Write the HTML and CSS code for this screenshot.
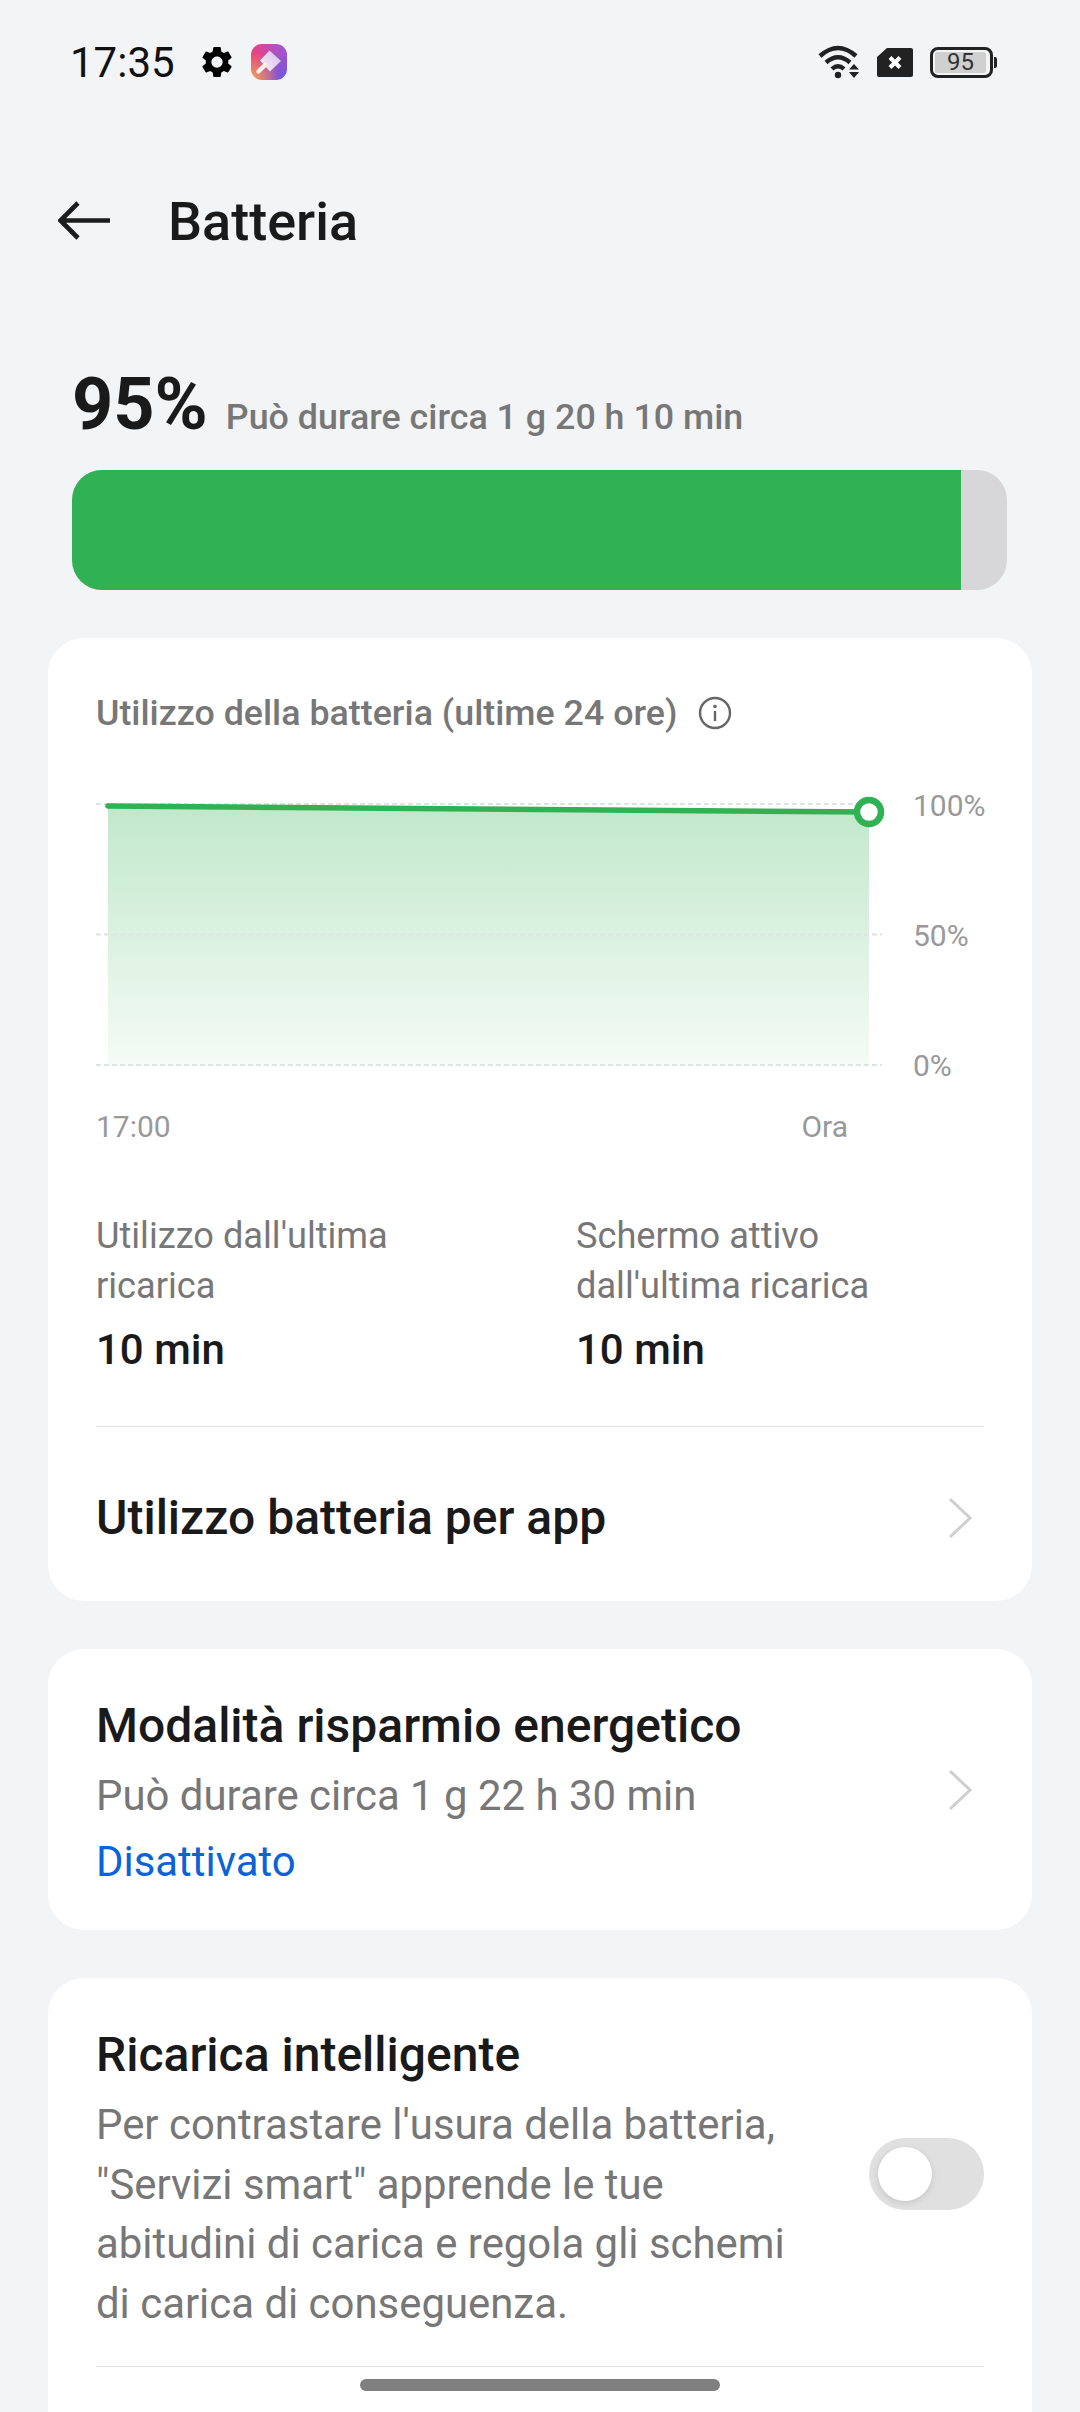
FILE: index.html
```html
<!DOCTYPE html>
<html lang="it">
<head>
  <meta charset="UTF-8" />
  <title>Batteria</title>
  <link rel="stylesheet" href="styles.css">
</head>
<body>
  <div class="screen">
    <div class="status-bar">
      <span class="clock">17:35</span>
      <svg class="gear" viewBox="2.4 2.4 19.2 19.2"><path fill-rule="evenodd" d="M19.14,12.94c0.04-0.3,0.06-0.61,0.06-0.94c0-0.32-0.02-0.64-0.07-0.94l2.03-1.58c0.18-0.14,0.23-0.41,0.12-0.61l-1.92-3.32c-0.12-0.22-0.37-0.29-0.59-0.22l-2.39,0.96c-0.5-0.38-1.03-0.7-1.62-0.94L14.4,2.81c-0.04-0.24-0.24-0.41-0.48-0.41h-3.84c-0.24,0-0.43,0.17-0.47,0.41L9.25,5.35C8.66,5.59,8.12,5.92,7.63,6.29L5.24,5.33c-0.22-0.08-0.47,0-0.59,0.22L2.74,8.87C2.62,9.08,2.66,9.34,2.86,9.48l2.03,1.58C4.84,11.36,4.8,11.69,4.8,12s0.02,0.64,0.07,0.94l-2.03,1.58c-0.18,0.14-0.23,0.41-0.12,0.61l1.92,3.32c0.12,0.22,0.37,0.29,0.59,0.22l2.39-0.96c0.5,0.38,1.03,0.7,1.62,0.94l0.36,2.54c0.05,0.24,0.24,0.41,0.48,0.41h3.84c0.24,0,0.44-0.17,0.47-0.41l0.36-2.54c0.59-0.24,1.13-0.56,1.62-0.94l2.39,0.96c0.22,0.08,0.47,0,0.59-0.22l1.92-3.32c0.12-0.22,0.07-0.47-0.12-0.61L19.14,12.94z M12,15.6c-1.98,0-3.6-1.62-3.6-3.6s1.62-3.6,3.6-3.6s3.6,1.62,3.6,3.6S13.98,15.6,12,15.6z"/></svg>
      <div class="app-icon">
        <svg viewBox="0 0 36 36">
          <defs><linearGradient id="brush" x1="1" y1="0" x2="0" y2="1"><stop offset="0" stop-color="#cdbdf3"/><stop offset="1" stop-color="#fff0ee"/></linearGradient></defs>
          <path d="M18.5 6.5 L30 17 L19 27.5 L9 16.5 Z" fill="url(#brush)"/>
          <path d="M14 21 L7.5 27.5" fill="none" stroke="#fff0ea" stroke-width="4.4" stroke-linecap="round"/>
        </svg>
      </div>
      <div class="status-right">
        <svg class="wifi" viewBox="0 0 42 34">
          <path d="M2 11 Q20 -5 38 11" fill="none" stroke="#222" stroke-width="4.4"/>
          <path d="M8 17.5 Q20 7 32 17.5" fill="none" stroke="#222" stroke-width="4.4"/>
          <path d="M14 24 Q20 18.5 26 24" fill="none" stroke="#222" stroke-width="4.4"/>
          <circle cx="20" cy="30" r="3.2" fill="#222"/>
          <path d="M36 19 L41 24.5 H31 Z M31 27 H41 L36 33 Z" fill="#222"/>
        </svg>
        <svg class="sim" viewBox="0 0 36 29">
          <path d="M10 0 H34 Q36 0 36 2 V27 Q36 29 34 29 H2 Q0 29 0 27 V9 Z" fill="#222"/>
          <path d="M13 9.5 L23 19.5 M23 9.5 L13 19.5" stroke="#fff" stroke-width="4" fill="none"/>
        </svg>
        <div class="batt">
          <div class="batt-body"><span class="batt-level">95</span></div>
          <div class="batt-nub"></div>
        </div>
      </div>
    </div>

    <div class="app-bar">
      <svg class="back" viewBox="0 0 52 40"><path d="M52 19.5 H3 M20 2 L2.5 19.5 L20 37" fill="none" stroke="#1c1c1c" stroke-width="4.6"/></svg>
      <h1 class="page-title">Batteria</h1>
    </div>

    <div class="level-row">
      <span class="level-pct">95%</span>
      <span class="level-note">Può durare circa 1 g 20 h 10 min</span>
    </div>
    <div class="level-bar"><div class="level-fill"></div></div>

    <section class="card usage-card">
      <div class="usage-head">
        <span class="usage-title">Utilizzo della batteria (ultime 24 ore)</span>
        <svg class="info" viewBox="0 0 34 34"><circle cx="17" cy="17" r="15" fill="none" stroke="#666" stroke-width="2.4"/><circle cx="17" cy="10.5" r="1.8" fill="#666"/><path d="M17 15 V25" stroke="#666" stroke-width="2.4"/></svg>
      </div>

      <div class="chart">
        <svg class="plot" viewBox="0 0 790 300">
          <defs><linearGradient id="area" x1="0" y1="0" x2="0" y2="1"><stop offset="0" stop-color="#c1e8cb"/><stop offset="1" stop-color="#f5fbf6"/></linearGradient></defs>
          <path d="M12 14 L773 20 V273 H12 Z" fill="url(#area)"/>
          <path d="M0 12 H786 M0 142.5 H786 M0 273 H786" stroke="#dfe4e2" stroke-width="2" stroke-dasharray="5 3" fill="none"/>
          <path d="M12 14 L773 20" stroke="#30b254" stroke-width="5.5" stroke-linecap="round"/>
          <circle cx="773" cy="20" r="12" fill="#fff" stroke="#30b254" stroke-width="6.5"/>
        </svg>
        <div class="y-axis">
          <span>100%</span>
          <span>50%</span>
          <span>0%</span>
        </div>
      </div>
      <div class="x-axis">
        <span>17:00</span>
        <span>Ora</span>
      </div>

      <div class="stats">
        <div class="stat">
          <div class="stat-label">Utilizzo dall'ultima<br>ricarica</div>
          <div class="stat-value">10 min</div>
        </div>
        <div class="stat">
          <div class="stat-label">Schermo attivo<br>dall'ultima ricarica</div>
          <div class="stat-value">10 min</div>
        </div>
      </div>

      <div class="row-app">
        <span class="row-title">Utilizzo batteria per app</span>
        <svg class="chevron" viewBox="0 0 24 42"><path d="M2 2 L22 21 L2 40" fill="none" stroke="#cfcfcf" stroke-width="3"/></svg>
      </div>
    </section>

    <section class="card saver-card">
      <div class="saver-text">
        <div class="row-title">Modalità risparmio energetico</div>
        <div class="row-sub">Può durare circa 1 g 22 h 30 min</div>
        <div class="row-state">Disattivato</div>
      </div>
      <svg class="chevron" viewBox="0 0 24 42"><path d="M2 2 L22 21 L2 40" fill="none" stroke="#cfcfcf" stroke-width="3"/></svg>
    </section>

    <section class="card smart-card">
      <div class="smart-row">
        <div class="smart-text">
          <div class="row-title">Ricarica intelligente</div>
          <div class="smart-desc">Per contrastare l'usura della batteria, "Servizi smart" apprende le tue abitudini di carica e regola gli schemi di carica di conseguenza.</div>
        </div>
        <div class="toggle"><div class="toggle-knob"></div></div>
      </div>
    </section>

    <div class="home-bar"></div>
  </div>
</body>
</html>
```

FILE: styles.css
```css
* {
  box-sizing: border-box;
}
html, body {
  margin: 0;
  padding: 0;
}
body {
  font-family: Roboto, "Noto Sans", sans-serif;
  color: #1a1a1a;
  background: #f2f4f6;
}
.screen {
  position: relative;
  width: 1080px;
  height: 2412px;
  overflow: hidden;
  background: #f2f4f6;
}

/* status bar */
.status-bar {
  display: flex;
  align-items: center;
  height: 44px;
  margin-top: 40px;
  padding: 0 83px 0 70px;
}
.clock {
  font-size: 42px;
  color: #111;
  width: 132px;
}
.gear {
  width: 30px;
  height: 30px;
  fill: #000;
}
.app-icon {
  width: 36px;
  height: 36px;
  margin-left: 19px;
  border-radius: 11px;
  background:
    radial-gradient(circle at 0% 100%, #f2a65a 0, rgba(242, 166, 90, 0) 55%),
    radial-gradient(circle at 100% 100%, #5f5cf2 0, rgba(95, 92, 242, 0) 75%),
    linear-gradient(45deg, #e8407c 40%, #a955dd 100%);
  background-color: #e8407c;
}
.app-icon svg {
  display: block;
  width: 36px;
  height: 36px;
}
.status-right {
  display: flex;
  align-items: center;
  margin-left: auto;
  gap: 17px;
}
.wifi {
  width: 42px;
  height: 34px;
}
.sim {
  width: 36px;
  height: 29px;
}
.batt {
  display: flex;
  align-items: center;
  gap: 1px;
}
.batt-body {
  width: 63px;
  height: 31px;
  border: 3px solid #222;
  border-radius: 8px;
  padding: 2px;
}
.batt-level {
  display: block;
  width: 51px;
  height: 21px;
  background: #d0d0d0;
  border-radius: 2px;
  font-size: 24px;
  line-height: 21px;
  text-align: center;
  color: #333;
}
.batt-nub {
  width: 3px;
  height: 11px;
  background: #222;
  border-radius: 0 2px 2px 0;
}

/* app bar */
.app-bar {
  display: flex;
  align-items: center;
  height: 60px;
  margin-top: 107px;
  padding-left: 58px;
}
.back {
  width: 52px;
  height: 40px;
}
.page-title {
  margin: 0 0 0 58px;
  font-size: 54px;
  font-weight: 500;
  color: #1a1a1a;
}

/* battery level */
.level-row {
  display: flex;
  align-items: baseline;
  gap: 18px;
  height: 84px;
  margin-top: 112px;
  padding-left: 72px;
}
.level-pct {
  font-size: 72px;
  font-weight: 700;
  line-height: 84px;
}
.level-note {
  font-size: 35.8px;
  font-weight: 480;
  color: #777;
}
.level-bar {
  width: 935px;
  height: 120px;
  margin: 23px 0 0 72px;
  background: #d7d7d9;
  border-radius: 30px;
  overflow: hidden;
}
.level-fill {
  width: 889px;
  height: 100%;
  background: #30b254;
}

/* cards */
.card {
  width: 984px;
  margin: 48px 0 0 48px;
  background: #fff;
  border-radius: 36px;
}
.usage-card {
  padding: 50px 48px 0;
}
.usage-head {
  display: flex;
  align-items: center;
  gap: 21px;
  height: 50px;
}
.usage-title {
  font-size: 35.8px;
  font-weight: 480;
  color: #777;
}
.info {
  width: 34px;
  height: 34px;
}

/* chart */
.chart {
  display: flex;
  margin-top: 54px;
}
.plot {
  width: 790px;
  height: 300px;
  flex: none;
}
.y-axis {
  display: flex;
  flex-direction: column;
  justify-content: space-between;
  height: 294px;
  margin-top: -3px;
  padding-left: 27px;
  font-size: 30px;
  line-height: 34px;
  color: #999;
}
.x-axis {
  display: flex;
  justify-content: space-between;
  width: 752px;
  margin-top: 17px;
  font-size: 30px;
  line-height: 36px;
  color: #999;
}
.stats {
  display: grid;
  grid-template-columns: 480px 1fr;
  margin-top: 66px;
}
.stat-label {
  font-size: 36.2px;
  line-height: 50px;
  color: #777;
}
.stat-value {
  margin-top: 12px;
  font-size: 42px;
  line-height: 54px;
  font-weight: 500;
}
.row-app {
  display: flex;
  align-items: center;
  justify-content: space-between;
  height: 175px;
  margin-top: 49px;
  padding: 8px 12px 0 0;
  border-top: 1px solid #e2e2e2;
}
.row-title {
  font-size: 48px;
  font-weight: 500;
  line-height: 60px;
}
.chevron {
  width: 24px;
  height: 42px;
  flex: none;
}

.saver-card {
  display: flex;
  align-items: center;
  justify-content: space-between;
  height: 281px;
  padding: 0 60px 0 48px;
}
.saver-text {
  align-self: flex-start;
  margin-top: 47px;
}
.row-sub {
  margin-top: 7px;
}
.row-sub,
.row-state {
  font-size: 41.9px;
  line-height: 66px;
  color: #777;
}
.row-state {
  color: #0a63d9;
}

.smart-card {
  height: 480px;
  padding: 47px 48px 0;
}
.smart-row {
  display: flex;
  align-items: center;
  justify-content: space-between;
  padding-bottom: 33px;
  border-bottom: 1px solid #e2e2e2;
}
.smart-text {
  width: 695px;
}
.smart-desc {
  margin-top: 10px;
  font-size: 41.9px;
  line-height: 59.5px;
  color: #777;
}
.toggle {
  width: 115px;
  height: 72px;
  margin-bottom: 10px;
  padding: 9px;
  background: #e0e0e0;
  border-radius: 36px;
}
.toggle-knob {
  width: 54px;
  height: 54px;
  background: #fff;
  border-radius: 50%;
  box-shadow: 0 2px 6px rgba(0, 0, 0, 0.12);
}

.home-bar {
  position: absolute;
  left: 360px;
  top: 2379px;
  width: 360px;
  height: 12px;
  background: #808080;
  border-radius: 6px;
}
```
